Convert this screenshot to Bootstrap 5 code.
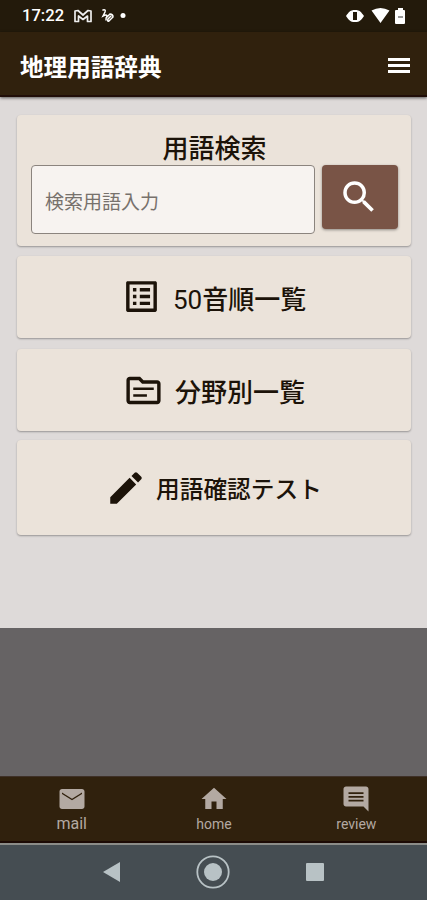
<!DOCTYPE html>
<html lang="ja">
<head>
<meta charset="utf-8">
<meta name="viewport" content="width=device-width, initial-scale=1">
<title>地理用語辞典</title>
<link rel="stylesheet" href="https://cdn.jsdelivr.net/npm/bootstrap@5.3.0/dist/css/bootstrap.min.css">
<style>
body{font-family:Roboto,"Noto Sans CJK JP",sans-serif;background:#dedad9;color:#1c1309;height:900px;overflow:hidden}
svg{display:block;flex:none;fill:currentColor}
.status{height:32px;background:#231a0b;padding:0 22px 0 22px;font-size:16.6px;font-weight:500;line-height:32px}
.topbar{height:65px;background:#30210d;padding:3px 16px 0 20px;box-shadow:0 1px 3px rgba(0,0,0,.6);border-bottom:2px solid #200e08;position:relative}
.app-title{font-size:23.6px;line-height:32px;font-weight:700;padding-top:5px}
.content{height:531px;padding:18px 16px 0 17px}
.panel{background:#ebe3da;border:0;border-radius:4px;box-shadow:0 1px 2px rgba(0,0,0,.32);color:#1c1309}
.panel-search{height:131px;margin-bottom:10px;padding:16px 13px 0 14px}
.panel-search h2{font-size:26px;line-height:32px;padding-top:2px;margin:0;font-weight:500}
.term{width:284px;height:69px;background:#f7f3f0!important;border:1px solid #8b847e;border-radius:4px;font-size:19px;padding:6px 14px 0 13px}
.term::placeholder{color:#77716c;opacity:1}
.go{width:76px;height:64px;background:#795446;border:0;border-radius:4px;padding:0 2px 0 0;box-shadow:0 1px 3px rgba(0,0,0,.4)}
.entry{font-size:26px;line-height:36px;font-weight:500;text-decoration:none}
.entry span{padding-top:2px}
.entry svg{margin-bottom:3px}
.e1{height:82px;margin-bottom:11px;padding:4px 0 0 104px}
.e1 svg{margin-bottom:5px}
.e1 span{margin-left:3px}
.digits{font-weight:400}
.e2{height:82px;margin-bottom:9px;padding:3px 0 0 106px}
.e2 span{margin-left:3px}
.e3{height:95px;padding:3px 0 0 88px;font-size:23.7px}
.e3 span{margin-left:1px}
.dim{height:148px;background:#666364}
.tabs{height:67px;background:#30210d;border-top:1px solid #3e3027;border-bottom:2px solid #1c0a04;color:#b3a9a2}
.tabs a{width:142.33px;color:#b3a9a2;text-decoration:none;font-size:14px;line-height:20px;padding:7px 0 0 1px}
.tabs a:first-child{font-size:16px;line-height:19px}
.sys{height:57px;background:#454d52;border-top:2px solid #8b8c88;color:#b8c2c5;padding:0 102px 2px 103px}
</style>
</head>
<body>
<div class="status d-flex align-items-center text-white">
  <span>17:22</span>
  <svg class="ms-auto order-2" width="60" height="20" viewBox="0 0 60 20">
    <path fill-rule="evenodd" d="M1 10C4 6 5 4 10 4s6 2 9 6c-3 4-4 6-9 6s-6-2-9-6Zm7-4v8h4V6Z"/>
    <path d="M26.500 4.500q9-5 18 0L35.500 17ZM51 4h2V2h5v2h1q1 0 1 1v12q0 1-1 1h-8q-1 0-1-1V5q0-1 1-1Z"/>
    <path stroke="#777" stroke-width="1.500" d="M53 11h5"/>
  </svg>
  <svg class="ms-2 order-1" width="58" height="20" viewBox="0 0 58 20">
    <path fill="none" stroke="#eee" stroke-width="1.700" stroke-linejoin="round" d="M3 15.500V5l3-.5 5 4.500 5-4.500 3 .5v10.500h-3.500V10L11 13.500 6.500 10v5.500Z"/>
    <path fill="none" stroke="#fff" stroke-width="1.500" stroke-linecap="round" d="M31 4q3-1 2 2l-2 4q4-2 4 0-1 2-1 4m0-2 4-4q3 0 3 3l-4 4q-2 1-1-2l3-3"/>
    <circle cx="51" cy="9.500" r="2.500"/>
  </svg>
</div>
<header class="topbar d-flex align-items-center justify-content-between text-white">
  <span class="app-title">地理用語辞典</span>
  <svg width="24" height="18" viewBox="0 0 24 18"><path d="M1 2h22v3H1zm0 6h22v3H1zm0 6h22v3H1z"/></svg>
</header>
<main class="content">
  <section class="card panel panel-search">
    <h2 class="text-center">用語検索</h2>
    <div class="d-flex justify-content-between align-items-start">
      <input class="form-control term" type="text" placeholder="検索用語入力">
      <button class="btn go text-white d-flex align-items-center justify-content-center" aria-label="検索">
        <svg width="42" height="42" viewBox="0 0 24 24"><path d="M15.500 14h-.79l-.28-.27A6.470 6.470 0 0 0 16 9.500 6.500 6.500 0 1 0 9.500 16c1.610 0 3.090-.59 4.230-1.570l.27.28v.79l5 4.990L20.490 19l-4.990-5zm-6 0C7.010 14 5 11.990 5 9.500S7.010 5 9.500 5 14 7.010 14 9.500 11.990 14 9.500 14z"/></svg>
      </button>
    </div>
  </section>
  <a href="#" class="card panel entry e1 flex-row align-items-center">
    <svg class="me-2" width="41" height="41" viewBox="0 0 24 24"><path fill-rule="evenodd" d="M19 5v14H5V5h14m1.100-2H3.900c-.5 0-.9.4-.9.900v16.200c0 .4.4.9.900.9h16.200c.4 0 .9-.5.900-.9V3.900c0-.5-.5-.9-.9-.9zM11 7h6v2h-6V7zm0 4h6v2h-6v-2zm0 4h6v2h-6zM7 7h2v2H7zm0 4h2v2H7zm0 4h2v2H7z"/></svg>
    <span><b class="digits">50</b>音順一覧</span>
  </a>
  <a href="#" class="card panel entry e2 flex-row align-items-center">
    <svg class="me-2" width="41" height="41" viewBox="0 0 24 24"><path fill-rule="evenodd" d="M20 6h-8l-2-2H4c-1.100 0-1.990.9-1.990 2L2 18c0 1.100.9 2 2 2h16c1.100 0 2-.9 2-2V8c0-1.100-.9-2-2-2zm0 12H4V6h5.170l2 2H20v10zm-2-6.300H6v-1.500h12v1.500zm-4 4H6v-1.500h8v1.500z"/></svg>
    <span>分野別一覧</span>
  </a>
  <a href="#" class="card panel entry e3 flex-row align-items-center">
    <svg class="me-2" width="42" height="42" viewBox="0 0 24 24"><path d="M3 17.250V21h3.750L17.810 9.940l-3.750-3.750L3 17.250zM20.710 7.040a1 1 0 0 0 0-1.410l-2.340-2.340a1 1 0 0 0-1.410 0l-1.830 1.830 3.750 3.750 1.830-1.830z"/></svg>
    <span>用語確認テスト</span>
  </a>
</main>
<div class="dim"></div>
<nav class="tabs d-flex justify-content-between">
  <a href="#" class="d-flex flex-column align-items-center"><svg width="30" height="30" viewBox="0 0 24 24"><path d="M20 4H4c-1.100 0-1.990.9-1.990 2L2 18c0 1.100.9 2 2 2h16c1.100 0 2-.9 2-2V6c0-1.100-.9-2-2-2zm0 4-8 5-8-5V6.700l8 5 8-5z"/></svg>mail</a>
  <a href="#" class="d-flex flex-column align-items-center"><svg width="30" height="30" viewBox="0 0 24 24"><path d="M10 20v-6h4v6h5v-8h3L12 3 2 12h3v8z"/></svg>home</a>
  <a href="#" class="d-flex flex-column align-items-center"><svg width="30" height="30" viewBox="0 0 24 24"><path d="M21.990 4c0-1.100-.89-2-1.990-2H4c-1.100 0-2 .9-2 2v12c0 1.100.9 2 2 2h14l4 4-.01-18zM18 14H6v-1.500h12V14zm0-3H6V9.500h12V11zm0-3H6V6.500h12V8z"/></svg>review</a>
</nav>
<footer class="sys d-flex align-items-center justify-content-between">
  <svg width="18" height="20" viewBox="0 0 18 20"><path d="M0 10 17 0v20Z"/></svg>
  <svg width="34" height="34" viewBox="0 0 34 34"><circle cx="17" cy="17" r="15.700" fill="none" stroke="currentColor" stroke-width="1.800"/><circle cx="17" cy="17" r="9"/></svg>
  <svg width="20" height="20" viewBox="0 0 20 20"><rect x="1" y="1" width="18" height="18" rx="1"/></svg>
</footer>
<script src="https://cdn.jsdelivr.net/npm/bootstrap@5.3.0/dist/js/bootstrap.bundle.min.js"></script>
</body>
</html>
